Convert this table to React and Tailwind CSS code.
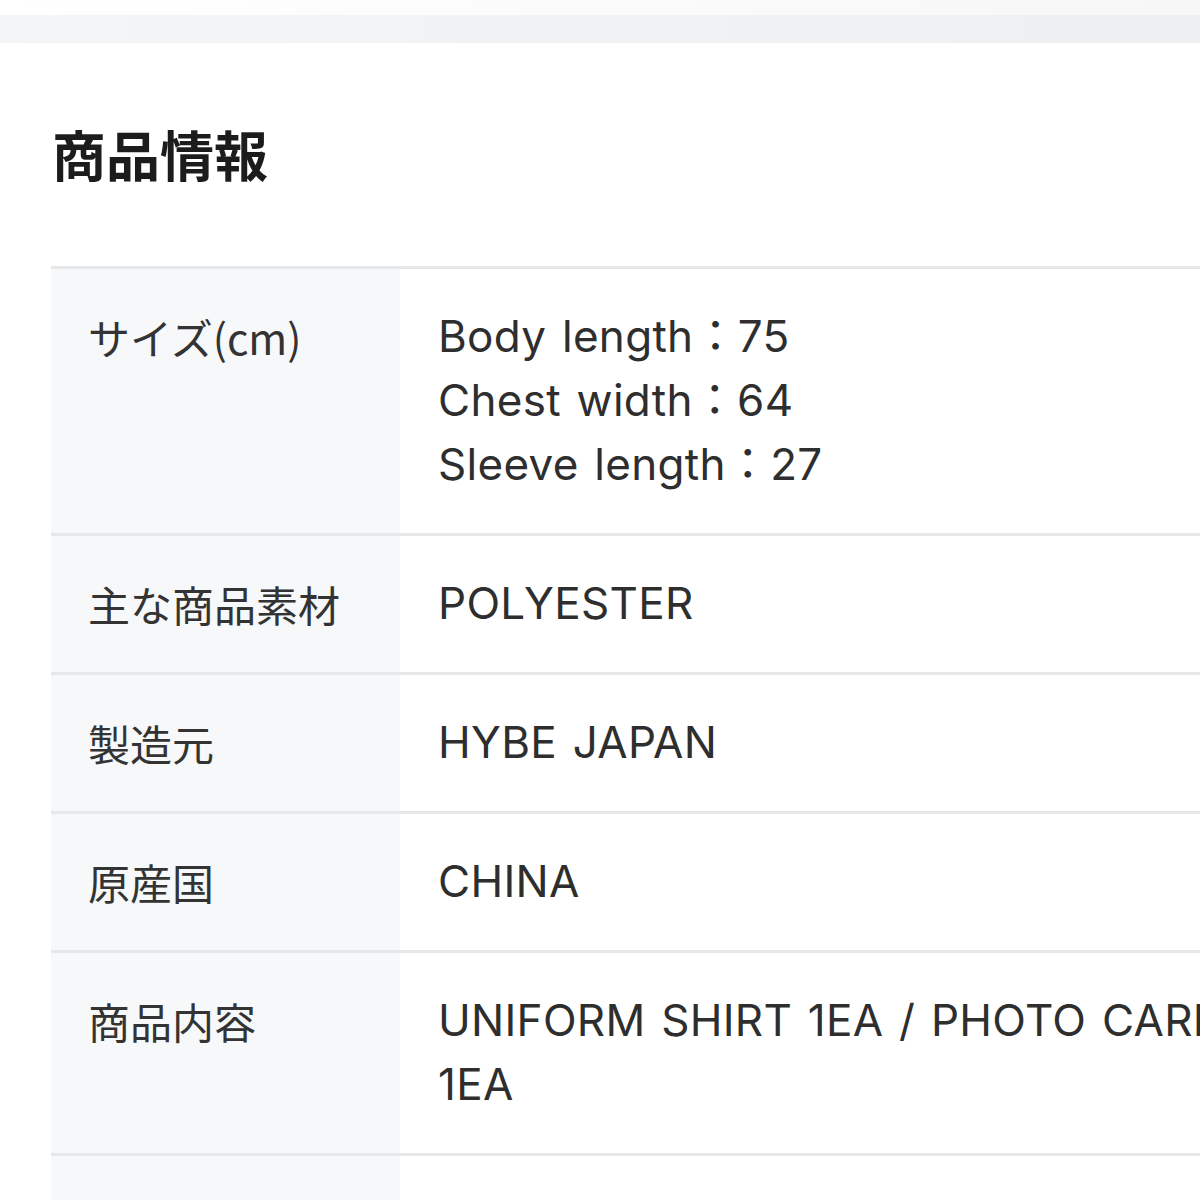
import React from "react";

const rows = [
  { label: "サイズ(cm)", value: ["Body length：75", "Chest width：64", "Sleeve length：27"] },
  { label: "主な商品素材", value: ["POLYESTER"] },
  { label: "製造元", value: ["HYBE JAPAN"] },
  { label: "原産国", value: ["CHINA"] },
  { label: "商品内容", value: ["UNIFORM SHIRT 1EA / PHOTO CARD 1EA"] },
  { label: "", value: [""] },
];

export default function App() {
  return (
    <div
      className="w-[1200px] h-[1200px] overflow-hidden bg-white relative"
      style={{ fontFamily: 'Inter, "Noto Sans CJK JP", sans-serif' }}
    >
      <div className="h-[15px] bg-gradient-to-r from-white to-[#f7f7f8]" />
      <div className="h-[28px] bg-gradient-to-r from-[#f4f5f7] to-[#eeeff1]" />
      <div className="pl-[52px] pt-[76px]">
        <h2
          className="text-[54px] leading-[70px] font-bold text-[#1c1c1c]"
          style={{ fontFamily: '"Noto Sans CJK JP", sans-serif' }}
        >
          商品情報
        </h2>
      </div>
      <div className="ml-[51px] mt-[77px] w-[1280px] border-t-[3px] border-[#e6e7e9]">
        {rows.map((r, i) => (
          <div key={i} className="flex border-b-[3px] border-[#e6e7e9]">
            <div
              className="w-[349px] shrink-0 bg-[#f7f8fa] pl-[37px] pt-[36px] pb-[36px] text-[42px] leading-[64px] text-[#333333]"
              style={{ fontFamily: '"Noto Sans CJK JP", sans-serif' }}
            >
              {r.label || "\u00a0"}
            </div>
            <div className="flex-1 bg-white pl-[38px] pr-[40px] pt-[35px] pb-[37px] text-[44px] leading-[64px] text-[#2e2e2e] tracking-[0.3px] [word-spacing:3px]">
              {r.value.map((v, j) => (
                <div key={j}>{v || "\u00a0"}</div>
              ))}
            </div>
          </div>
        ))}
      </div>
    </div>
  );
}
